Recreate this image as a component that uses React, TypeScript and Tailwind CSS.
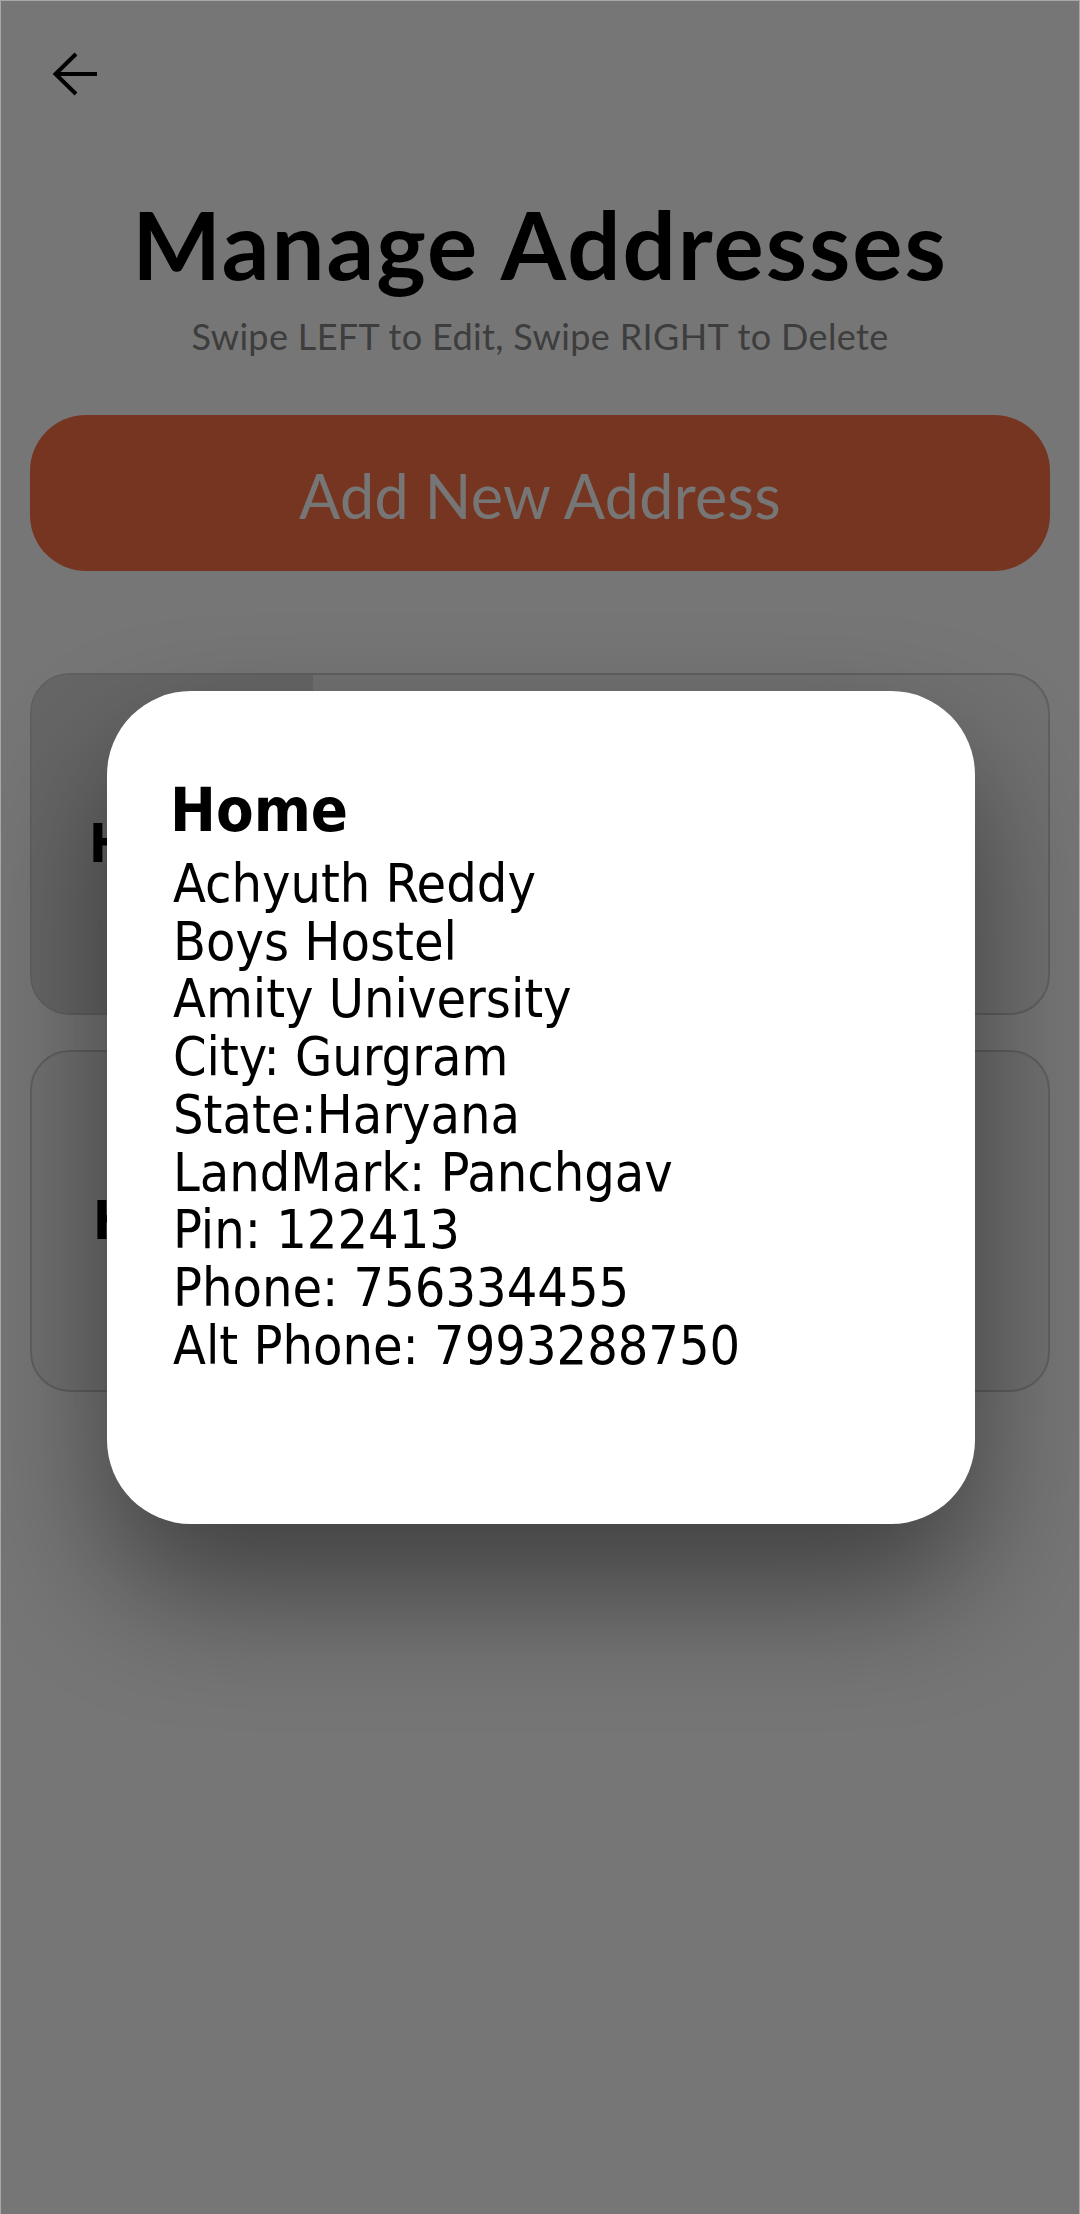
import React from 'react'

const lines = [
  'Achyuth Reddy',
  'Boys Hostel',
  'Amity University',
  'City: Gurgram',
  'State:Haryana',
  'LandMark: Panchgav',
  'Pin: 122413',
  'Phone: 756334455',
  'Alt Phone: 7993288750',
]

const dejavu = "font-['DejaVu_Sans_Condensed','DejaVu_Sans',sans-serif] font-stretch-condensed"

function BackArrow() {
  return (
    <svg width="48" height="46" viewBox="0 0 48 46" fill="none" stroke="#000" strokeWidth="4">
      <path d="M3 22 H45" />
      <path d="M24 2 L3.5 22 L24 42" />
    </svg>
  )
}

function AddressCard({ shaded, textLeft }: { shaded?: boolean; textLeft: string }) {
  return (
    <div className="relative h-[342px] rounded-[40px] border-2 border-[#cfcfcf] bg-[#f4f4f4] overflow-hidden flex">
      {shaded && <div className="w-[281px] h-full bg-[#dcdcdc]" />}
      <div className={`absolute inset-y-0 ${textLeft} flex items-center text-[53px] font-bold text-black ${dejavu}`}>
        Home
      </div>
    </div>
  )
}

export default function App() {
  return (
    <div className="relative w-[1080px] h-[2214px] bg-white overflow-hidden border-t border-l border-r border-[#a8a8a8] font-['Lato',sans-serif]">
      <div className="px-[29px]">
        <div className="pt-[51px] pl-[22px] h-[98px]">
          <BackArrow />
        </div>
        <h1 className="mt-[98px] text-center text-[94px] leading-[94px] font-bold text-black tracking-[2px]">
          Manage Addresses
        </h1>
        <p className="mt-[27px] text-center text-[36px] leading-[36px] text-[#858585] tracking-[0.35px]">
          Swipe LEFT to Edit, Swipe RIGHT to Delete
        </p>
        <button className="mt-[61px] w-full h-[156px] rounded-[56px] bg-[#fd7446] text-white text-[61px] tracking-[0.3px] pt-[6px] flex items-center justify-center">
          Add New Address
        </button>
        <div className="mt-[102px] flex flex-col gap-[35px]">
          <AddressCard shaded textLeft="left-[57px]" />
          <AddressCard textLeft="left-[61px]" />
        </div>
      </div>

      {/* dim layer */}
      <div className="absolute inset-0 bg-black/[0.537]" />

      {/* dialog */}
      <div className={`absolute left-[106px] top-[690px] w-[868px] h-[833px] rounded-[84px] bg-white pl-[66px] pt-[84px] shadow-[0_65px_130px_rgba(0,0,0,0.46)] ${dejavu}`}>
        <div className="ml-[-3px] text-[61px] leading-[70px] font-bold text-black">Home</div>
        <div className="mt-[10px] text-[53.5px] leading-[57.7px] text-black">
          {lines.map((l) => (
            <div key={l}>{l}</div>
          ))}
        </div>
      </div>
    </div>
  )
}
